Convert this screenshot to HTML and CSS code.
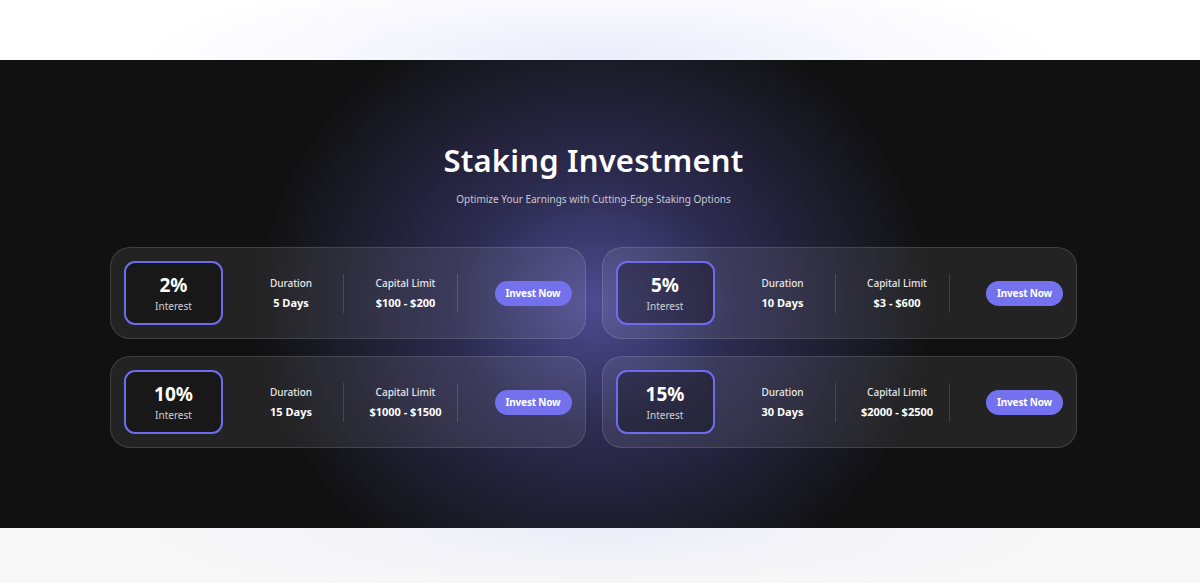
FILE: index.html
```html
<!DOCTYPE html>
<html lang="en">
<head>
  <meta charset="UTF-8">
  <meta name="viewport" content="width=device-width, initial-scale=1.0">
  <title>Staking Investment</title>
  <link rel="stylesheet" href="styles.css">
</head>
<body>
  <div class="top-strip"></div>
  <section class="staking">
    <div class="container">
      <h2 class="title">Staking Investment</h2>
      <p class="subtitle">Optimize Your Earnings with Cutting-Edge Staking Options</p>
      <div class="plans">
        <div class="plan">
          <div class="interest">
            <span class="rate">2%</span>
            <span class="rate-label">Interest</span>
          </div>
          <div class="info info-duration">
            <span class="label">Duration</span>
            <span class="value">5 Days</span>
          </div>
          <div class="divider"></div>
          <div class="info info-capital">
            <span class="label">Capital Limit</span>
            <span class="value">$100 - $200</span>
          </div>
          <div class="divider"></div>
          <button class="invest-btn">Invest Now</button>
        </div>
        <div class="plan">
          <div class="interest">
            <span class="rate">5%</span>
            <span class="rate-label">Interest</span>
          </div>
          <div class="info info-duration">
            <span class="label">Duration</span>
            <span class="value">10 Days</span>
          </div>
          <div class="divider"></div>
          <div class="info info-capital">
            <span class="label">Capital Limit</span>
            <span class="value">$3 - $600</span>
          </div>
          <div class="divider"></div>
          <button class="invest-btn">Invest Now</button>
        </div>
        <div class="plan">
          <div class="interest">
            <span class="rate">10%</span>
            <span class="rate-label">Interest</span>
          </div>
          <div class="info info-duration">
            <span class="label">Duration</span>
            <span class="value">15 Days</span>
          </div>
          <div class="divider"></div>
          <div class="info info-capital">
            <span class="label">Capital Limit</span>
            <span class="value">$1000 - $1500</span>
          </div>
          <div class="divider"></div>
          <button class="invest-btn">Invest Now</button>
        </div>
        <div class="plan">
          <div class="interest">
            <span class="rate">15%</span>
            <span class="rate-label">Interest</span>
          </div>
          <div class="info info-duration">
            <span class="label">Duration</span>
            <span class="value">30 Days</span>
          </div>
          <div class="divider"></div>
          <div class="info info-capital">
            <span class="label">Capital Limit</span>
            <span class="value">$2000 - $2500</span>
          </div>
          <div class="divider"></div>
          <button class="invest-btn">Invest Now</button>
        </div>
      </div>
    </div>
  </section>
  <div class="bottom-strip"></div>
</body>
</html>
```

FILE: styles.css
```css
/* Staking section */
body {
  margin: 0;
  padding: 0;
  font-family: "Noto Sans", "Open Sans", sans-serif;
  background: #fff;
  overflow: hidden;
}
.top-strip {
  height: 60px;
  background: radial-gradient(ellipse 460px 90px at 50% 100%, #ececfb 0%, #f6f6fd 50%, #ffffff 100%);
}
.bottom-strip {
  height: 55px;
  background: radial-gradient(ellipse 460px 80px at 50% 0%, #ececf8 0%, #f4f4f8 50%, #f8f8f8 100%);
}
.staking {
  height: 468px;
  background-color: #111111;
  background-image: radial-gradient(ellipse 340px 310px at 49.5% 52%, rgba(92, 90, 178, 0.8) 0%, rgba(72, 70, 145, 0.5) 40%, rgba(17, 17, 17, 0) 100%);
}
.container {
  width: 967px;
  margin: 0 auto;
  padding: 80px 13px 0 0;
  text-align: center;
}
.title {
  margin: 0;
  color: #fff;
  font-size: 31px;
  font-weight: 600;
  line-height: 40px;
  letter-spacing: 0.2px;
}
.subtitle {
  margin: 11px 0 0;
  color: #c8c8d0;
  font-size: 10px;
  line-height: 16px;
}
.plans {
  margin-top: 40px;
  display: grid;
  grid-template-columns: 1fr 1fr;
  column-gap: 16px;
  row-gap: 17px;
}
.plan {
  display: flex;
  align-items: center;
  height: 92px;
  box-sizing: border-box;
  padding: 0 13px;
  border: 1px solid rgba(255, 255, 255, 0.13);
  border-radius: 20px;
  background: rgba(255, 255, 255, 0.08);
}
.interest {
  width: 99px;
  height: 64px;
  box-sizing: border-box;
  border: 2px solid #6f6bef;
  border-radius: 11px;
  background: rgba(0, 0, 0, 0.3);
  display: flex;
  flex-direction: column;
  align-items: center;
  justify-content: center;
}
.rate {
  color: #fff;
  font-size: 19px;
  font-weight: 700;
  line-height: 22px;
}
.rate-label {
  margin-top: 3px;
  color: #d0d0d4;
  font-size: 10px;
  line-height: 14px;
}
.info {
  display: flex;
  flex-direction: column;
  align-items: center;
  gap: 6px;
  box-sizing: border-box;
}
.info-duration {
  width: 104px;
  margin-left: 16px;
}
.info-capital {
  width: 113px;
  padding-left: 10px;
}
.label {
  color: #e6e6ea;
  font-size: 10px;
  font-weight: 500;
  line-height: 14px;
}
.value {
  color: #fff;
  font-size: 11px;
  font-weight: 700;
  line-height: 14px;
}
.divider {
  width: 1px;
  height: 39px;
  background: rgba(255, 255, 255, 0.14);
}
.invest-btn {
  margin-left: auto;
  width: 77px;
  height: 25px;
  border: none;
  border-radius: 13px;
  background: #7471ee;
  color: #fff;
  font-family: inherit;
  font-size: 10px;
  font-weight: 700;
  letter-spacing: -0.2px;
  padding: 0;
  cursor: pointer;
}
```
